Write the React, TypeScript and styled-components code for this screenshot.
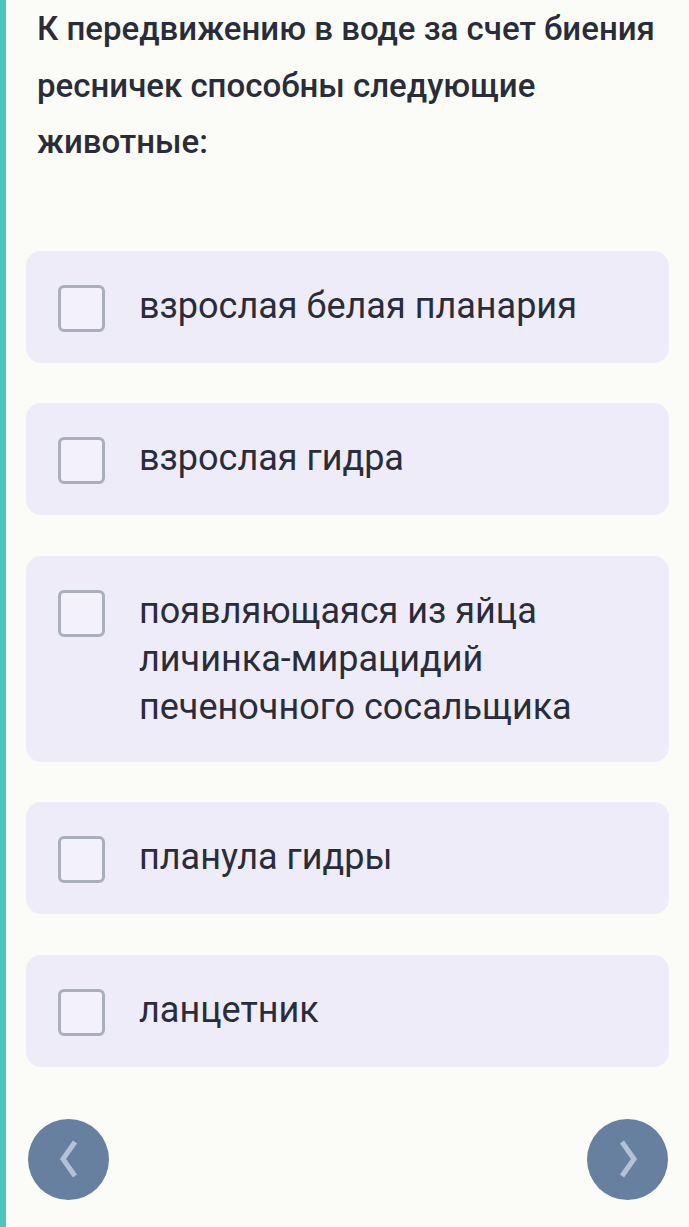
import React from "react";
import styled, { createGlobalStyle } from "styled-components";

const Global = createGlobalStyle`
  html, body { margin: 0; padding: 0; background: #fbfcf8; }
  body { font-family: Roboto, "Noto Sans", sans-serif; }
`;

const Page = styled.div`
  min-height: 1227px;
  border-left: 6px solid #4dc4be;
  box-sizing: border-box;
  padding: 1px 20px 0 20px;
  background: #fbfcf8;
`;

const Title = styled.h1`
  margin: 0 0 80px 0;
  padding-left: 11px;
  font-size: 33px;
  font-weight: 500;
  line-height: 56.5px;
  color: #2a2c3a;
`;

const Options = styled.div`
  display: flex;
  flex-direction: column;
  gap: 40.5px;
`;

const Card = styled.label`
  display: flex;
  align-items: flex-start;
  gap: 34px;
  background: #efecf9;
  border-radius: 15px;
  padding: 31px 20px 31px 32px;
  cursor: pointer;
`;

const Box = styled.span`
  flex: none;
  width: 47px;
  height: 47px;
  box-sizing: border-box;
  border: 3.5px solid #abafbb;
  border-radius: 6px;
  margin-top: 3px;
  background: #f3f1fa;
`;

const OptionText = styled.span`
  font-size: 36px;
  line-height: 48px;
  color: #2a2c3a;
  font-weight: 400;
`;

const Nav = styled.div`
  display: flex;
  justify-content: space-between;
  padding: 52px 1px 0 2px;
`;

const RoundButton = styled.button`
  width: 81px;
  height: 81px;
  border-radius: 50%;
  border: none;
  background: #67809f;
  display: flex;
  align-items: center;
  justify-content: center;
  padding: 0;
`;

const ChevronSvg = styled.svg`
  flex: none;
  display: block;
  width: 24px;
  height: 42px;
`;

const Chevron = ({ dir }: { dir: "left" | "right" }) => (
  <ChevronSvg viewBox="0 0 24 42">
    <polyline
      points={dir === "left" ? "18,4 6,21 18,38" : "6,4 18,21 6,38"}
      fill="none"
      stroke="#b5c1d7"
      strokeWidth={5}
    />
  </ChevronSvg>
);

const options = [
  "взрослая белая планария",
  "взрослая гидра",
  "появляющаяся из яйца личинка-мирацидий печеночного сосальщика",
  "планула гидры",
  "ланцетник",
];

export default function App() {
  return (
    <>
      <Global />
      <Page>
        <Title>К передвижению в воде за счет биения ресничек способны следующие животные:</Title>
        <Options>
          {options.map((o) => (
            <Card key={o}>
              <Box />
              <OptionText>{o}</OptionText>
            </Card>
          ))}
        </Options>
        <Nav>
          <RoundButton aria-label="Назад"><Chevron dir="left" /></RoundButton>
          <RoundButton aria-label="Вперёд"><Chevron dir="right" /></RoundButton>
        </Nav>
      </Page>
    </>
  );
}
